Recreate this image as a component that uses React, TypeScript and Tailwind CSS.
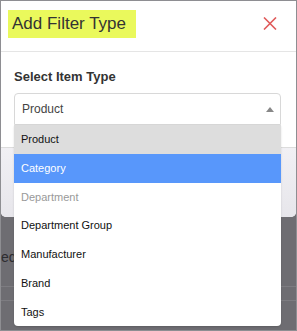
const items = [
  { label: "Product", tone: "hover" },
  { label: "Category", tone: "active" },
  { label: "Department", tone: "disabled" },
  { label: "Department Group", tone: "" },
  { label: "Manufacturer", tone: "" },
  { label: "Brand", tone: "" },
  { label: "Tags", tone: "" },
];

export default function App() {
  return (
    <div className="relative h-[331px] w-[297px] overflow-hidden border border-[#8e8e92] bg-[#6e6d72] font-['Liberation_Sans',Arial,sans-serif]">
      {/* page behind the backdrop */}
      <div className="pt-[248px]">
        <div className="h-[16px] text-[14px] leading-[16px] text-[#2d2c30]">ed</div>
        <div className="h-[22px] border-b border-[#7d7c81]" />
        <div className="h-[14px] border-b border-[#7d7c81]" />
      </div>

      {/* modal */}
      <div className="absolute inset-x-0 top-0 flex h-[216px] flex-col overflow-hidden rounded-b-[5px] bg-white">
        <div className="flex h-[51px] items-start border-b border-[#e5e5e5] pl-[7px] pt-[9px]">
          <span className="h-[28px] w-[128px] bg-[#eaf95c] pl-[4px] text-[17px] leading-[28px] text-[#333]">
            Add Filter Type
          </span>
          <button className="ml-auto mr-[19px] mt-[7px]">
            <svg width="14" height="13" viewBox="0 0 14 13">
              <path d="M1 0.5 L13 12.5 M13 0.5 L1 12.5" stroke="#e05a5a" strokeWidth="1.6" />
            </svg>
          </button>
        </div>

        <div className="pb-[22px] pl-[13px] pr-[15px] pt-[16px]">
          <div className="text-[13px] font-bold leading-[18px] text-[#333]">Select Item Type</div>
          <div className="mt-[7px] flex h-[32px] items-center justify-between rounded-t-[4px] border border-[#d8d8d8] bg-white pl-[7px] pr-[6px]">
            <span className="text-[12px] text-[#444]">Product</span>
            <svg width="8" height="5" viewBox="0 0 8 5">
              <path d="M0 5 L4 0 L8 5 Z" fill="#888" />
            </svg>
          </div>
        </div>

        <div className="flex-1 border-t border-[#dcdcdc] bg-gradient-to-b from-[#f1f0f4] to-[#e7e6eb]" />
      </div>

      {/* open select menu */}
      <ul className="absolute left-[13px] top-[124px] w-[267px] overflow-hidden rounded-b-[4px] bg-white shadow-[0_1px_2px_rgba(0,0,0,0.15)]">
        {items.map((it) => (
          <li
            key={it.label}
            className={
              "flex h-[28.75px] items-center pl-[7px] text-[11px] " +
              (it.tone === "hover"
                ? "bg-[#dddddd] text-[#111]"
                : it.tone === "active"
                ? "bg-[#5897fb] text-white"
                : it.tone === "disabled"
                ? "text-[#999]"
                : "text-[#111]")
            }
          >
            {it.label}
          </li>
        ))}
      </ul>
    </div>
  );
}
